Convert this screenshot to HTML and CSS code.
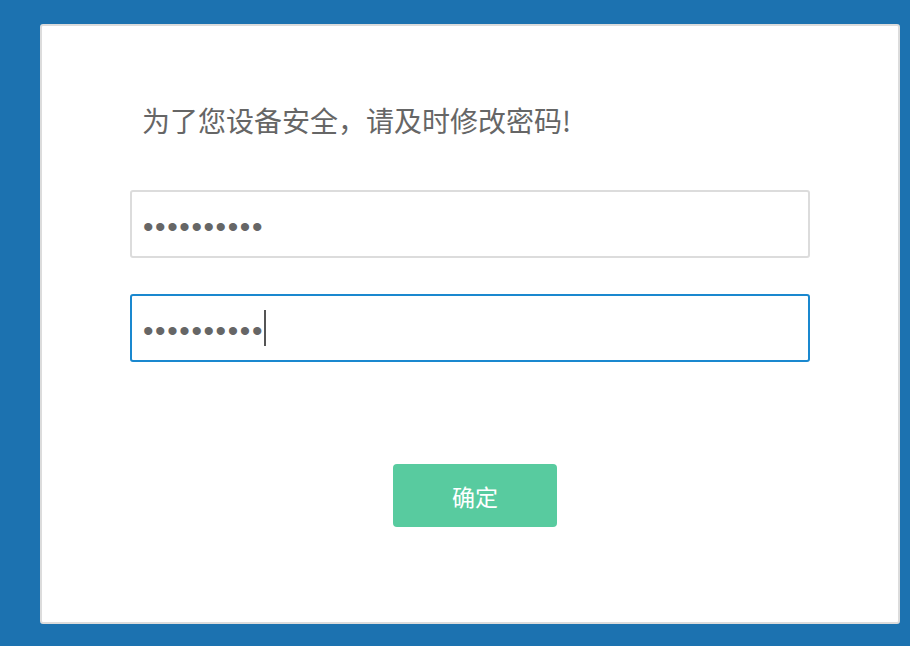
FILE: index.html
```html
<!DOCTYPE html>
<html lang="zh-CN">
<head>
<meta charset="utf-8">
<title>修改密码</title>
<link rel="stylesheet" href="styles.css">
</head>
<body>
<div class="page">
  <form class="card">
    <h1 class="title">为了您设备安全，请及时修改密码!</h1>
    <div class="fields">
      <input class="field" type="password" value="1234567890">
      <div class="field-wrap">
        <input class="field field-active" type="password" value="1234567890">
        <span class="caret"></span>
      </div>
    </div>
    <div class="actions">
      <button class="btn" type="button">确定</button>
    </div>
  </form>
</div>
</body>
</html>
```

FILE: styles.css
```css
html, body {
  margin: 0;
  padding: 0;
  height: 100%;
}
body {
  background: #1c72b0;
  font-family: "Noto Sans CJK SC", "Liberation Sans", sans-serif;
}
.page {
  padding: 24px 10px 22px 40px;
}
.card {
  box-sizing: border-box;
  width: 860px;
  height: 600px;
  background: #fff;
  border: 2px solid #dcdcdc;
  border-radius: 3px;
  padding: 0 88px;
  display: flex;
  flex-direction: column;
}
.title {
  margin: 74px 0 0 12px;
  font-size: 28px;
  line-height: 40px;
  font-weight: normal;
  color: #666;
}
.fields {
  margin-top: 50px;
  display: flex;
  flex-direction: column;
  gap: 36px;
}
.field-wrap {
  position: relative;
}
.field {
  box-sizing: border-box;
  display: block;
  width: 100%;
  height: 68px;
  border: 2px solid #dcdcdc;
  border-radius: 3px;
  padding: 5px 10px 0 11px;
  font-family: "Liberation Sans", Arial, sans-serif;
  font-size: 30px;
  letter-spacing: 1.6px;
  color: #666;
  caret-color: transparent;
  outline: none;
  background: #fff;
}
.field-active {
  border-color: #1a88cf;
}
.caret {
  position: absolute;
  left: 134px;
  top: 16px;
  width: 2px;
  height: 36px;
  background: #555;
}
.actions {
  margin-top: 102px;
  display: flex;
  justify-content: center;
  padding-left: 10px;
}
.btn {
  width: 164px;
  height: 63px;
  border: none;
  border-radius: 4px;
  background: #58cb9f;
  color: #fff;
  font-family: "Noto Sans CJK SC", sans-serif;
  font-size: 23px;
  cursor: pointer;
}
```
